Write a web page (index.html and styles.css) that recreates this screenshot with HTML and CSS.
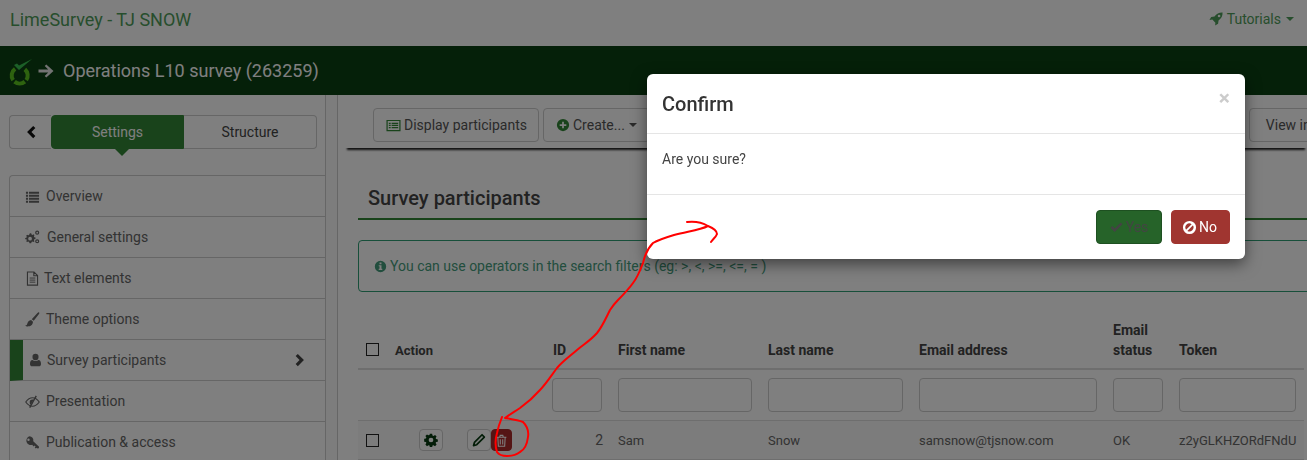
FILE: index.html
```html
<!DOCTYPE html>
<html lang="en">
<head>
<meta charset="utf-8">
<title>Survey participants</title>
<link rel="stylesheet" href="styles.css">
</head>
<body>
<svg class="defs" width="0" height="0" aria-hidden="true">
  <symbol id="i-list" viewBox="0 0 16 16"><path d="M1 3h2.2v2H1zM4.2 3H15v2H4.2zM1 6.2h2.2v2H1zM4.2 6.2H15v2H4.2zM1 9.4h2.2v2H1zM4.2 9.4H15v2H4.2zM1 12.6h2.2v2H1zM4.2 12.6H15v2H4.2z"/></symbol>
  <symbol id="i-cogs" viewBox="0 0 16 16"><path fill-rule="evenodd" d="M5.600 3.400l1 .1.4 1.300 1 .4 1.200-.6.9.9-.6 1.200.4 1 1.300.4v1.300l-1.300.4-.4 1 .6 1.200-.9.9-1.200-.6-1 .4-.4 1.300H4.800l-.4-1.300-1-.4-1.200.6-.9-.9.6-1.200-.4-1L.2 9.900V8.600l1.300-.4.4-1-.6-1.200.9-.9 1.200.6 1-.4.4-1.300zM5.400 7.200a2 2 0 1 0 0 4 2 2 0 0 0 0-4z"/><path fill-rule="evenodd" d="M13 .6a2.200 2.200 0 1 1 0 4.400 2.200 2.200 0 0 1 0-4.400zm0 1.300a.9.900 0 1 0 0 1.800.9.900 0 0 0 0-1.800zM13 9.800a2.200 2.200 0 1 1 0 4.400 2.200 2.200 0 0 1 0-4.400zm0 1.300a.9.900 0 1 0 0 1.800.9.900 0 0 0 0-1.800z"/></symbol>
  <symbol id="i-file" viewBox="0 0 16 16"><path fill="none" stroke="currentColor" stroke-width="1.200" d="M2.600 1h7l3.800 3.800V15H2.600zM9.400 1v4h4"/><path fill="none" stroke="currentColor" d="M5 7.500h6M5 9.700h6M5 11.900h6"/></symbol>
  <symbol id="i-brush" viewBox="0 0 16 16"><path d="M15 .5c.6.400.4 1-.1 1.600L9.300 9.300 7.200 7.700 13.300 1c.6-.5 1.200-.8 1.700-.5zM6.500 8.500l2 1.800c-.1 2-1.200 4.700-4.500 5-1.600.2-3 0-3.800-1 1.500.1 2-.6 2.300-2 .3-1.600 1.700-3.500 4-3.800z"/></symbol>
  <symbol id="i-user" viewBox="1.800 1 12.400 14"><path d="M8 1a3.400 3.400 0 0 1 3.400 3.600A3.400 3.400 0 0 1 8 8.200a3.400 3.400 0 0 1-3.400-3.600A3.400 3.400 0 0 1 8 1zM4.600 8c.9.800 2 1.200 3.400 1.200S10.500 8.800 11.400 8c1.600.2 2.800 1.600 2.800 4.400 0 1.700-1 2.600-2.400 2.600H4.200c-1.400 0-2.400-.9-2.400-2.600C1.800 9.600 3 8.200 4.600 8z"/></symbol>
  <symbol id="i-eye" viewBox="0 0 16 16"><path fill="none" stroke="currentColor" stroke-width="1.200" d="M.8 8.500C3 5.500 5.500 4 8 4s5 1.500 7.200 4.500C13 11.500 10.500 13 8 13S3 11.500.8 8.500z"/><path d="M5 9a3 3 0 0 1 3-3.200l1.200.3L6 11.400A3 3 0 0 1 5 9z"/><path fill="none" stroke="currentColor" stroke-width="1.500" d="M12 2L5 14.500"/></symbol>
  <symbol id="i-key" viewBox="0 0 16 16"><path fill-rule="evenodd" d="M4.800 1.400a4.200 4.200 0 0 1 4 5.200l6.200 6-.3 1.500-1.300.3-.9-.9-1 .9-1.100-1.100.9-1-1-1-1 .9-1.700-1.700A4.200 4.200 0 1 1 4.800 1.400zM3.700 3.700a1.300 1.300 0 1 0 0 2.600 1.300 1.300 0 0 0 0-2.600z"/></symbol>
  <symbol id="i-right" viewBox="0 0 16 16"><path d="M5.500 1L3 3.500 7.500 8 3 12.500 5.500 15l7-7z"/></symbol>
  <symbol id="i-left" viewBox="0 0 16 16"><path d="M10.500 1L13 3.500 8.500 8l4.500 4.500-2.500 2.500-7-7z"/></symbol>
  <symbol id="i-arrow" viewBox="0 0 16 16"><path d="M8.300 1.500L15.500 8l-7.200 6.500-1.600-1.500 3.500-3.600H.5V6.600h9.700L6.700 3z"/></symbol>
  <symbol id="i-rocket" viewBox="0 0 16 16"><path d="M15.500.5c.2 3.800-1.300 6.800-4.600 9.200l-.5 3.800L7 15.500l.3-3.300-3.500-3.500-3.300.3 2-3.400 3.800-.5C8.700 1.800 11.700.3 15.500.5zM11.500 3a1.500 1.500 0 1 0 0 3 1.500 1.500 0 0 0 0-3z"/></symbol>
  <symbol id="i-table" viewBox="0 0 16 16"><path fill-rule="evenodd" d="M.5 2h15v12H.5zM1.800 3.300v9.400h12.400V3.300z"/><path d="M3 5h2v1.300H3zM6 5h7v1.300H6zM3 7.300h2v1.300H3zM6 7.300h7v1.300H6zM3 9.700h2V11H3zM6 9.700h7V11H6z"/></symbol>
  <symbol id="i-plus" viewBox="0 0 16 16"><path fill-rule="evenodd" d="M8 1a7 7 0 1 1 0 14A7 7 0 0 1 8 1zM7 4.200v2.800H4.200v2H7v2.800h2V9h2.800V7H9V4.200z"/></symbol>
  <symbol id="i-info" viewBox="0 0 16 16"><path fill-rule="evenodd" d="M8 1a7 7 0 1 1 0 14A7 7 0 0 1 8 1zM6.800 3.200v2h2.400v-2zM5.800 6.400v1.300h1v3.100h-1v1.500h4.400v-1.500h-1V6.400z"/></symbol>
  <symbol id="i-gear" viewBox="0 0 16 16"><path fill-rule="evenodd" d="M6.700.8h2.600l.4 2 1.200.5 1.700-1.100 1.800 1.800-1.100 1.700.5 1.200 2 .4v2.600l-2 .4-.5 1.200 1.100 1.700-1.800 1.800-1.700-1.100-1.200.5-.4 2H6.700l-.4-2-1.200-.5-1.700 1.100-1.800-1.800 1.100-1.700-.5-1.200-2-.4V6.700l2-.4.5-1.200-1.100-1.700 1.800-1.800 1.700 1.100 1.200-.5zM8 5.300a2.700 2.700 0 1 0 0 5.400 2.700 2.700 0 0 0 0-5.400z"/></symbol>
  <symbol id="i-pencil" viewBox="0 0 16 16"><path fill="none" stroke="currentColor" stroke-width="2" stroke-linejoin="round" d="M11.500 2l2.600 2.600-8.700 8.800-3.600 1 1-3.600z"/></symbol>
  <symbol id="i-trash" viewBox="0 0 16 16"><path fill="none" stroke="currentColor" stroke-width="1.300" d="M2 4h12M3.500 4l.6 11h7.800l.6-11M5.800 4l.6-2.300h3.200l.6 2.300M6.500 6.500v6.500M9.500 6.500v6.500"/></symbol>
  <symbol id="i-check" viewBox="0 0 16 16"><path d="M5.800 13.600L.6 8.400l2.200-2.200 3 3 7.400-7.400 2.200 2.200z"/></symbol>
  <symbol id="i-ban" viewBox="0 0 16 16"><path fill-rule="evenodd" d="M8 1a7 7 0 1 1 0 14A7 7 0 0 1 8 1zM4.900 4.900a4.400 4.400 0 0 0-.6 5.500l6-6a4.400 4.400 0 0 0-5.400.5zM11.700 5.600l-6 6a4.400 4.400 0 0 0 6-6z"/></symbol>
</svg>

<div class="page">
  <header class="topnav">
    <a class="brand">LimeSurvey - TJ SNOW</a>
    <a class="tutorials"><svg class="ic ic-14"><use href="#i-rocket"/></svg>Tutorials<span class="caret"></span></a>
  </header>
  <div class="surveybar">
    <svg class="logo" viewBox="0 0 24 30" aria-hidden="true">
      <path class="logo-ring" d="M7.100 11.900A8 8 0 0 0 5.150 23.100M6.560 24.600A8 8 0 0 0 16.840 24.600M18.250 23.100A8 8 0 0 0 16.840 12.400"/>
      <path class="logo-check" d="M6 8L9 6.500 11 8.500 24 2 11 13z"/>
    </svg>
    <svg class="ic bar-arrow"><use href="#i-arrow"/></svg>
    <span class="survey-title">Operations L10 survey (263259)</span>
  </div>
  <div class="main">
    <aside class="sidebar">
      <div class="side-inner">
        <div class="tabs">
          <button class="tab tab-back"><svg class="ic ic-14"><use href="#i-left"/></svg></button>
          <button class="tab tab-active">Settings</button>
          <button class="tab tab-plain">Structure</button>
        </div>
        <ul class="menu">
          <li class="menu-item"><svg class="ic ic-15"><use href="#i-list"/></svg>Overview</li>
          <li class="menu-item"><svg class="ic ic-15 gap-7"><use href="#i-cogs"/></svg>General settings</li>
          <li class="menu-item"><svg class="ic ic-15 gap-4"><use href="#i-file"/></svg>Text elements</li>
          <li class="menu-item"><svg class="ic ic-15"><use href="#i-brush"/></svg>Theme options</li>
          <li class="menu-item menu-active"><svg class="ic ic-user"><use href="#i-user"/></svg>Survey participants<svg class="ic ic-14 menu-chev"><use href="#i-right"/></svg></li>
          <li class="menu-item"><svg class="ic ic-15"><use href="#i-eye"/></svg>Presentation</li>
          <li class="menu-item"><svg class="ic ic-15"><use href="#i-key"/></svg>Publication &amp; access</li>
        </ul>
      </div>
      <div class="resizer"></div>
    </aside>
    <section class="content">
      <div class="toolbar">
        <button class="btn btn-display"><svg class="ic ic-15 green"><use href="#i-table"/></svg>Display participants</button>
        <button class="btn"><svg class="ic ic-14 green"><use href="#i-plus"/></svg>Create...<span class="caret"></span></button>
        <button class="btn btn-hidden-a">Manage attributes</button>
        <button class="btn btn-hidden-b">Export</button>
        <button class="btn btn-view">View in CPDB</button>
      </div>
      <div class="body">
        <h2 class="page-title">Survey participants</h2>
        <div class="alert"><svg class="ic ic-13"><use href="#i-info"/></svg>You can use operators in the search filters (eg: &gt;, &lt;, &gt;=, &lt;=, = )</div>
        <table class="grid">
          <colgroup>
            <col class="c-check"><col class="c-action"><col class="c-id"><col class="c-first"><col class="c-last"><col class="c-email"><col class="c-status"><col class="c-token">
          </colgroup>
          <thead>
            <tr class="head-row">
              <th class="th-check"><span class="check"></span></th>
              <th class="th-action">Action</th>
              <th class="th-id">ID</th>
              <th>First name</th>
              <th>Last name</th>
              <th>Email address</th>
              <th>Email status</th>
              <th>Token</th>
            </tr>
            <tr class="filter-row">
              <td></td><td></td>
              <td><input class="filter"></td>
              <td><input class="filter"></td>
              <td><input class="filter"></td>
              <td><input class="filter"></td>
              <td><input class="filter"></td>
              <td><input class="filter"></td>
            </tr>
          </thead>
          <tbody>
            <tr class="data-row">
              <td><span class="check"></span></td>
              <td>
                <div class="actions">
                  <button class="act act-gear"><svg class="ic ic-14"><use href="#i-gear"/></svg></button>
                  <button class="act act-edit"><svg class="ic ic-14"><use href="#i-pencil"/></svg></button>
                  <button class="act act-del"><svg class="ic ic-13"><use href="#i-trash"/></svg></button>
                </div>
              </td>
              <td class="num">2</td>
              <td>Sam</td>
              <td>Snow</td>
              <td>samsnow@tjsnow.com</td>
              <td>OK</td>
              <td>z2yGLKHZORdFNdU</td>
            </tr>
          </tbody>
        </table>
      </div>
    </section>
  </div>
</div>

<div class="backdrop"></div>

<div class="modal">
  <div class="modal-head">
    <h4 class="modal-title">Confirm</h4>
    <span class="modal-close">×</span>
  </div>
  <div class="modal-body">Are you sure?</div>
  <div class="modal-foot">
    <button class="mbtn mbtn-yes"><svg class="ic ic-13"><use href="#i-check"/></svg>Yes</button>
    <button class="mbtn mbtn-no"><svg class="ic ic-15"><use href="#i-ban"/></svg>No</button>
  </div>
</div>

<svg class="scribble" viewBox="0 0 1307 460" aria-hidden="true">
  <path d="M687 222C695 221 703 223 708 226C713 228 717 231 717 234C716 237 713 239 711 242M708 226C700 230 690 231 674 235C664 238 658 240 653 243C648 248 645 254 643 263C640 271 637 278 633 283C628 290 623 295 618 300C614 304 612 307 610 310C605 320 602 327 597 333C590 341 584 344 577 350C569 357 563 361 557 368C551 376 546 384 540 390C533 398 527 403 520 408C514 412 509 415 505 418C511 419 518 420 523 422C527 426 529 431 528 437C527 445 524 450 520 452C515 456 511 456 507 456C502 456 499 455 497 452C495 446 495 440 497 433C498 428 500 422 502 417"/>
</svg>
</body>
</html>
```

FILE: styles.css
```css
* { box-sizing: border-box; }
html, body { margin: 0; padding: 0; }
body {
  width: 1307px;
  height: 460px;
  overflow: hidden;
  background: #fff;
  font-family: Roboto, "Liberation Sans", sans-serif;
  font-size: 14px;
  color: #666;
}
.defs { position: absolute; }
.ic { fill: currentColor; flex: none; display: inline-block; }
.ic-13 { width: 13px; height: 13px; }
.ic-14 { width: 14px; height: 14px; }
.ic-15 { width: 15px; height: 15px; }
.ic-user { width: 11px; height: 14px; }
.green { color: #328637; }
.page { width: 1307px; height: 460px; overflow: hidden; display: flex; flex-direction: column; }

.topnav {
  height: 46px;
  flex: none;
  display: flex;
  align-items: center;
  justify-content: space-between;
  padding: 0 13px 8px 10px;
}
.brand { font-size: 18px; color: #4f9c5a; }
.tutorials { display: flex; align-items: center; gap: 4px; color: #4f9c5a; font-size: 14px; }
.caret {
  display: inline-block;
  width: 0;
  height: 0;
  margin-left: 1px;
  border-top: 4px solid currentColor;
  border-left: 4px solid transparent;
  border-right: 4px solid transparent;
}
.surveybar {
  height: 49px;
  flex: none;
  background: #0b4012;
  display: flex;
  align-items: center;
  padding-left: 8px;
  color: #fff;
}
.logo { width: 24px; height: 30px; margin-right: 6px; margin-top: 3px; }
.logo-ring { fill: none; stroke: #5cc71f; stroke-width: 4; }
.logo-check { fill: #39c050; }
.bar-arrow { width: 16px; height: 16px; margin-right: 9px; color: #e6e6e6; }
.survey-title { font-size: 18px; color: #fff; }

.main { flex: 1; display: flex; min-height: 0; }
.sidebar { width: 338px; flex: none; display: flex; }
.side-inner { width: 325px; padding: 20px 0 0 9px; }
.resizer { width: 13px; border-left: 1px solid #ccc; border-right: 1px solid #ccc; background: #fafafa; }
.tabs { display: flex; height: 34px; width: 308px; }
.tab { font: inherit; border: 1px solid #ccc; background: #fff; color: #444; padding: 0; }
.tab-back { width: 42px; border-radius: 4px 0 0 4px; border-right: 0; color: #111; display: flex; align-items: center; justify-content: center; }
.tab-active {
  width: 133px;
  background: #328637;
  border-color: #328637;
  border-radius: 4px 0 0 4px;
  color: #fff;
  position: relative;
}
.tab-active::after {
  content: "";
  position: absolute;
  left: 63px;
  top: 33px;
  border-top: 7px solid #328637;
  border-left: 7px solid transparent;
  border-right: 7px solid transparent;
}
.tab-plain { flex: 1; border-left: 0; border-radius: 0 4px 4px 0; }
.menu { list-style: none; margin: 26px 0 0; padding: 0; border: 1px solid #ccc; border-right: 0; border-radius: 4px 0 0 0; }
.menu-item {
  height: 41px;
  display: flex;
  align-items: center;
  padding-left: 15px;
  gap: 6px;
  border-bottom: 1px solid #ccc;
  color: #666;
}
.gap-7 { margin-right: 1px; }
.gap-4 { margin-right: -2px; }
.menu-active { border-left: 13px solid #328637; padding-left: 7px; }
.menu-chev { margin-left: auto; margin-right: 18px; color: #444; }

.content { flex: 1; min-width: 0; overflow: hidden; }
.toolbar {
  height: 53px;
  margin-left: 7px;
  padding: 13px 0 0 28px;
  display: flex;
  gap: 4px;
  box-shadow: 0 4px 2px -2px #222;
  background: #fff;
  position: relative;
}
.btn {
  font: inherit;
  height: 34px;
  flex: none;
  display: flex;
  align-items: center;
  gap: 3px;
  padding: 0 12px;
  background: #fff;
  border: 1px solid #ccc;
  border-radius: 4px;
  color: #555;
  white-space: nowrap;
}
.btn-display { padding-right: 11px; }
.btn-hidden-a { width: 300px; }
.btn-hidden-b { width: 285px; }
.btn-view { margin-left: 2px; padding-left: 16px; }

.body { padding: 0 0 0 20px; }
.page-title {
  margin: 38px 0 0;
  padding: 0 0 8px 10px;
  font-size: 20px;
  line-height: 24px;
  font-weight: 500;
  color: #444;
  border-bottom: 2px solid #328637;
  width: 949px;
}
.alert {
  margin-top: 20px;
  width: 1000px;
  height: 52px;
  border: 1px solid #2e9e74;
  border-radius: 4px;
  display: flex;
  align-items: center;
  gap: 3px;
  padding-left: 15px;
  color: #459c7c;
}
.grid { border-collapse: collapse; table-layout: fixed; width: 946px; margin-top: 20px; }
.c-check { width: 29px; }
.c-action { width: 157px; }
.c-id { width: 66px; }
.c-first { width: 150px; }
.c-last { width: 151px; }
.c-email { width: 194px; }
.c-status { width: 66px; }
.c-token { width: 133px; }
.grid th {
  height: 57px;
  text-align: left;
  vertical-align: bottom;
  padding: 0 8px 8px;
  font-weight: 700;
  color: #444;
  line-height: 20px;
  border-bottom: 2px solid #ddd;
}
.grid th.th-check { padding-bottom: 12px; }
.grid th.th-action { font-size: 13px; padding-bottom: 7px; }
.grid th.th-id { padding-left: 9px; }
.filter-row td { height: 51px; padding: 0 8px; border-bottom: 1px solid #ddd; }
.filter { display: block; width: 100%; height: 34px; background: #fff; border: 1px solid #ccc; border-radius: 4px; }
.filter-row td:nth-child(3) .filter { width: 50px; }
.check { display: block; width: 13px; height: 13px; border: 1px solid #222; background: transparent; }
.data-row td { height: 39px; padding: 1px 8px 0; border-bottom: 1px solid #ddd; background: #f8f8f8; white-space: nowrap; font-size: 13px; }
.data-row .num { text-align: right; padding-right: 7px; font-size: 14px; }
.actions { display: flex; padding-left: 24px; }
.act { width: 24px; height: 22px; padding: 0; border: 1px solid #ccc; border-radius: 4px; background: #fff; color: #063a10; display: flex; align-items: center; justify-content: center; }
.act-gear { margin-right: 24px; }
.act-del { width: 21px; background: #ab2a2a; border-color: #ab2a2a; color: #fff; }

.backdrop { position: fixed; inset: 0; background: rgba(0, 0, 0, 0.5); }

.modal {
  position: absolute;
  left: 647px;
  top: 74px;
  width: 598px;
  height: 185px;
  background: #fff;
  border-radius: 6px;
  box-shadow: 0 5px 15px rgba(0, 0, 0, 0.5);
  color: #333;
  display: flex;
  flex-direction: column;
}
.modal-head {
  height: 60px;
  flex: none;
  display: flex;
  justify-content: space-between;
  padding: 15px 15px 0;
  border-bottom: 1px solid #e5e5e5;
}
.modal-title { margin: 0; font-size: 20px; line-height: 30px; font-weight: 500; color: #333; }
.modal-close { font-size: 21px; font-weight: 700; line-height: 18px; color: #ccc; }
.modal-body { height: 61px; flex: none; padding: 17px 15px 0; border-bottom: 1px solid #e5e5e5; color: #444; }
.modal-foot { flex: 1; display: flex; justify-content: flex-end; align-items: flex-start; gap: 9px; padding: 15px 15px 0; }
.mbtn { font: inherit; height: 34px; display: flex; align-items: center; justify-content: center; gap: 3px; border-radius: 4px; padding: 0; }
.mbtn-yes { width: 66px; background: #266329; border: 1px solid #1e5021; color: #444; }
.mbtn-no { width: 59px; background: #a03530; border: 1px solid #a03530; color: #fff; gap: 2px; padding-right: 2px; }

.scribble { position: absolute; left: 0; top: 0; width: 1307px; height: 460px; pointer-events: none; }
.scribble path { fill: none; stroke: #f00; stroke-width: 2; stroke-linecap: round; stroke-linejoin: round; }
```
